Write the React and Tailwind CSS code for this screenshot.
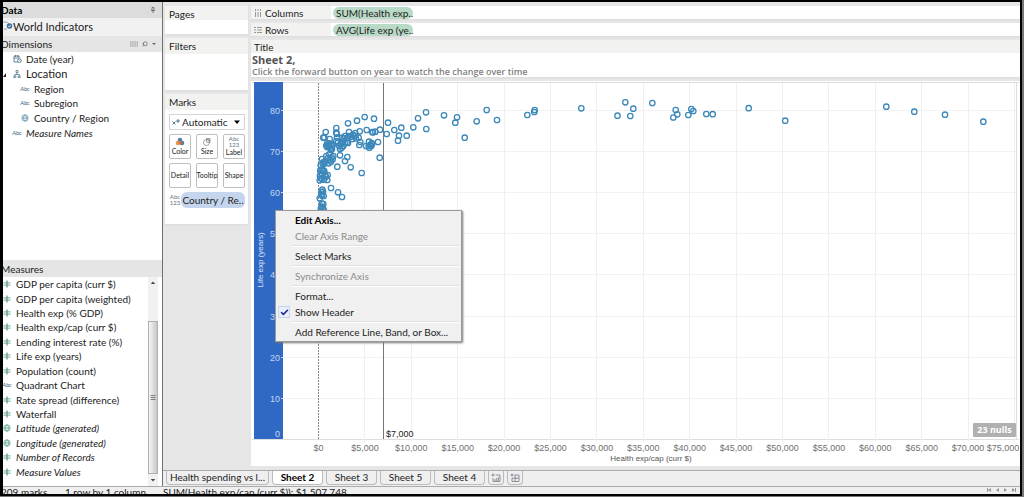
import React from "react";
import { Search, Check } from "lucide-react";

const dimensions = [
  { name: "Date (year)", icon: "date", indent: "pl-2" },
  { name: "Location", icon: "tree", indent: "pl-2", group: true },
  { name: "Region", icon: "abc", indent: "pl-4" },
  { name: "Subregion", icon: "abc", indent: "pl-4" },
  { name: "Country / Region", icon: "globe", indent: "pl-4" },
  { name: "Measure Names", icon: "abc", indent: "pl-2", italic: true },
];

const measures = [
  { name: "GDP per capita (curr $)", icon: "number" },
  { name: "GDP per capita (weighted)", icon: "number" },
  { name: "Health exp (% GDP)", icon: "number" },
  { name: "Health exp/cap (curr $)", icon: "number" },
  { name: "Lending interest rate (%)", icon: "number" },
  { name: "Life exp (years)", icon: "number" },
  { name: "Population (count)", icon: "number" },
  { name: "Quadrant Chart", icon: "abc" },
  { name: "Rate spread (difference)", icon: "number" },
  { name: "Waterfall", icon: "number" },
  { name: "Latitude (generated)", icon: "greenGlobe", italic: true },
  { name: "Longitude (generated)", icon: "greenGlobe", italic: true },
  { name: "Number of Records", icon: "number", italic: true },
  { name: "Measure Values", icon: "number", italic: true },
];

const sheets = ["Health spending vs l...", "Sheet 2", "Sheet 3", "Sheet 5", "Sheet 4"];

const xTicks = [
  "$0", "$5,000", "$10,000", "$15,000", "$20,000", "$25,000", "$30,000", "$35,000",
  "$40,000", "$45,000", "$50,000", "$55,000", "$60,000", "$65,000", "$70,000", "$75,000",
];

// circle centres, in the units of the chart's viewBox
const points = [
  [426, 112.3], [426.3, 129], [418, 118.3], [413.3, 127.3], [406.7, 135.7],
  [401.3, 127.7], [399, 135.7], [398, 140.7], [394.3, 130], [388, 122.7],
  [386.7, 134], [379.7, 157.7], [380, 129.7], [378, 142], [374, 118.7],
  [364.7, 117], [357, 120.7], [348, 123.3], [336.3, 128], [366.7, 130],
  [372.3, 132], [373, 132.4], [375.3, 131.7], [359.7, 131.3], [349, 132],
  [336.3, 132.7], [336.7, 133.7], [325.7, 132], [323.3, 137.7], [324.3, 137.5],
  [329.7, 139], [327.3, 143], [328, 144.5], [326.3, 145.5], [329.3, 143.5],
  [330.7, 144], [331.7, 145.7], [328.7, 147], [330.3, 148], [332, 149],
  [333, 144.7], [327, 147], [331, 150], [336.3, 141], [338, 142.7],
  [339.3, 146], [340.7, 144], [342.3, 141.7], [343.3, 146], [344.7, 143.3],
  [340, 149], [341.7, 147.7], [346.7, 142.5], [343.7, 138.3], [342, 137.7],
  [347.3, 138], [348.7, 136], [350.7, 136.7], [352.3, 139], [355, 136],
  [356, 138.5], [355.3, 133], [353, 134.7], [358.7, 137.7], [360.3, 142],
  [359.3, 145], [345, 136], [348, 143], [337, 137.5],
  [369, 141.7], [366, 146], [370.3, 145], [371.3, 146], [369.3, 147.7],
  [372, 144.3], [368.7, 146], [371.7, 143],
  [340, 155.3], [347.3, 157], [345, 161], [337.3, 166.7], [350.7, 167.3],
  [361.7, 173], [326.3, 156], [328, 158], [329.7, 160], [331.7, 157.3],
  [333.3, 156], [332.7, 159.3], [331, 161.7], [328.7, 163.3], [329, 154.5],
  [322, 159], [323.7, 162], [320.7, 165], [322.7, 163.7], [324.3, 163.7],
  [325.5, 161], [320.3, 170.7], [321.7, 169.7], [324.3, 171], [325, 174.7],
  [320, 175.7], [322, 174], [327.7, 175], [326, 176.7], [320.7, 178],
  [319.7, 180.3], [324, 179.7], [327.3, 180], [321.7, 178.7], [323, 170],
  [331, 188], [338, 192.3], [342, 197], [322.3, 189.7], [323, 191.7],
  [321.7, 194.3], [319.7, 198.3], [323.7, 196], [322, 195.7], [321.3, 192],
  [323.3, 204], [321.7, 206.7], [321, 208], [323.7, 210], [320.7, 211],
  [322, 203.5], [323, 208], [444, 115.3], [457, 117.3], [455.3, 122.7],
  [464.7, 137.7], [476.7, 121.3], [486.7, 110], [497, 120], [527.3, 115],
  [534.7, 110], [534.3, 112], [581.3, 108.3], [617.5, 115.7], [625.3, 102.3],
  [633.3, 108.7], [630.3, 116], [652.3, 103], [675.7, 110], [677.3, 114.3],
  [673.3, 117.5], [688.3, 115], [691.3, 109], [693.3, 111], [706.3, 114],
  [712.7, 114.2], [748.7, 108.2], [785.2, 120.7], [886.3, 106.7], [914.3, 111.7],
  [945, 114.7], [983.3, 121.7],
];

const FieldIcon = ({ type }) => {
  if (type === "abc") {
    return (
      <span className="w-3 shrink-0 text-center text-[6px] italic text-[#3a647f]" aria-hidden="true">
        Abc
      </span>
    );
  }
  if (type === "number") {
    return (
      <svg className="w-3 h-2 shrink-0 stroke-[#4c8f78]" viewBox="0 0 12 8" fill="none">
        <path d="M6 0.5v7" strokeWidth="1.6" strokeOpacity="0.7" />
        <path d="M2.5 2.9h7M2.5 5.1h7" strokeWidth="0.8" />
      </svg>
    );
  }
  if (type === "globe" || type === "greenGlobe") {
    return (
      <svg
        className={`w-3 h-2 shrink-0 ${type === "globe" ? "stroke-[#5b8ba5]" : "stroke-[#4c9a7c]"}`}
        viewBox="0 0 12 8"
        fill="none"
        strokeWidth="0.7"
      >
        <circle cx="6" cy="4" r="3.2" />
        <ellipse cx="6" cy="4" rx="1.4" ry="3.2" />
        <path d="M3 4h6" />
      </svg>
    );
  }
  if (type === "date") {
    return (
      <svg className="w-3 h-2 shrink-0 stroke-[#52798c]" viewBox="0 0 12 8" fill="none" strokeWidth="0.9">
        <path d="M7 7H3V1h5v2M3 3h5M4.5 0v2M6.7 0v2" />
        <circle cx="8.4" cy="5.6" r="1.9" />
        <path d="M8.4 4.6v1h1" strokeWidth="0.6" />
      </svg>
    );
  }
  return (
    <svg className="w-3 h-2 shrink-0 stroke-[#52798c]" viewBox="0 0 12 8" fill="none" strokeWidth="0.8">
      <path d="M5 0.5h2v2H5zM6 2.5v2M3.8 6V4.5h4.5V6M2.8 6h2v1.5h-2zM7.2 6h2v1.5h-2z" />
    </svg>
  );
};

const Field = ({ field }) => (
  <li className={`flex flex-1 items-center gap-[3px] whitespace-nowrap ${field.indent || ""}`}>
    <FieldIcon type={field.icon} />
    <span className={`${field.italic ? "italic" : ""} ${field.group ? "text-[11px]" : ""}`}>
      {field.name}
    </span>
  </li>
);

const Sidebar = () => (
  <aside className="w-40 shrink-0 flex flex-col overflow-hidden bg-white border-r border-[#6f6f6f]">
    <h2 className="flex h-4 items-center justify-between bg-[#dcdcdc] pr-1.5 font-bold text-black">
      <span className="-ml-0.5">Data</span>
      <svg className="size-1.5 stroke-[#666]" viewBox="0 0 6 6" fill="none">
        <path d="M2 0.5h2v3H2zM1 3.5h4M3 3.5V6" strokeWidth="0.8" />
      </svg>
    </h2>
    <div className="flex h-[18px] items-center bg-[#f1f1f1] text-[11px]">
      <svg className="w-2.5 h-3 shrink-0" viewBox="0 0 10 12" fill="none">
        <path d="M0 1h4l2 2v1M1 8h3" stroke="#8ba3bd" />
        <circle cx="6.5" cy="5" r="2.8" fill="#44739f" />
        <path d="M5.2 5l1 1 1.8-2" stroke="#fff" strokeWidth="0.8" />
      </svg>
      World Indicators
    </div>
    <div className="flex h-4 items-center justify-between bg-[#e5e5e5] pr-1.5">
      <h3 className="-ml-0.5">Dimensions</h3>
      <div className="flex items-center gap-1 text-[#666]">
        <svg className="w-2 h-1.5 stroke-[#888]" viewBox="0 0 8 6" strokeDasharray="1.5 0.7">
          <path d="M0 1h8M0 3h8M0 5h8" strokeWidth="0.9" />
        </svg>
        <Search size={6} strokeWidth={3} className="-scale-x-100" />
        <svg className="w-1 h-1 fill-[#666]" viewBox="0 0 4 4">
          <path d="M0 1h4L2 3z" />
        </svg>
      </div>
    </div>
    <div className="relative flex-1">
      <ul className="flex h-[88px] flex-col">
        {dimensions.map((field) => (
          <Field key={field.name} field={field} />
        ))}
      </ul>
      <svg className="absolute left-0 top-5 w-1 h-1.5 fill-[#222]" viewBox="0 0 4 6">
        <path d="M3 1v4H0z" />
      </svg>
    </div>
    <h3 className="flex h-[17px] shrink-0 items-center bg-[#e5e5e5]">
      <span className="-ml-0.5">Measures</span>
    </h3>
    <div className="flex h-[209px] shrink-0">
      <ul className="-ml-0.5 flex flex-1 flex-col pb-[7px]">
        {measures.map((field) => (
          <Field key={field.name} field={field} />
        ))}
      </ul>
      <div className="mr-1 flex w-[10px] flex-col items-center justify-between bg-[#f1f1f1] py-1">
        <svg className="w-1.5 h-1 fill-[#444]" viewBox="0 0 6 4">
          <path d="M0.8 3h4.4L3 0.5z" />
        </svg>
        <div className="mt-9 mb-1 flex w-full flex-1 items-center justify-center border border-[#b0b0b0] bg-linear-to-r from-[#f6f6f6] to-[#c8c8c8]">
          <svg className="w-1.5 h-2 stroke-[#666]" viewBox="0 0 6 8">
            <path d="M0.5 1.5h5M0.5 3.5h5M0.5 5.5h5" strokeWidth="0.8" />
          </svg>
        </div>
        <svg className="w-1.5 h-1 fill-[#444]" viewBox="0 0 6 4">
          <path d="M0.8 1h4.4L3 3.5z" />
        </svg>
      </div>
    </div>
  </aside>
);

const MarkButton = ({ label, children }) => (
  <button className="flex h-[25px] min-w-0 flex-1 flex-col items-center justify-center rounded-xs border border-[#bfbfbf] bg-white text-[7px] leading-[9px]">
    {children}
    {label}
  </button>
);

const Shelves = () => (
  <div className="w-[83px] shrink-0 flex flex-col gap-1 pt-1">
    <section className="h-7 bg-white shadow-xs">
      <h3 className="h-[14px] bg-[#f2f2f0] px-1 leading-4">Pages</h3>
    </section>
    <section className="h-[52px] bg-white shadow-xs">
      <h3 className="h-4 bg-[#f2f2f0] px-1 leading-4">Filters</h3>
    </section>
    <section className="h-[130px] bg-white shadow-xs">
      <h3 className="h-4 bg-[#f2f2f0] px-1 leading-4">Marks</h3>
      <div className="flex flex-col gap-1 py-1 pl-1 pr-[3px]">
        <div className="relative flex h-4 items-center border border-[#d5d5d5]">
          <svg className="ml-0.5 w-2 h-2 shrink-0 stroke-[#44718f]" viewBox="0 0 8 8">
            <path d="M0.5 3.5l3 3M3.5 3.5l-3 3M4 3h4M6 1v4" strokeWidth="0.9" />
          </svg>
          <select
            aria-label="Mark type"
            className="w-full appearance-none bg-transparent pl-0.5 text-[10px] leading-[14px] outline-none"
          >
            <option>Automatic</option>
          </select>
          <svg className="pointer-events-none absolute right-1 top-1 w-1.5 h-1.5 fill-black" viewBox="0 0 6 6">
            <path d="M0 1.5h6L3 5z" />
          </svg>
        </div>
        <div className="flex gap-[5px]">
          <MarkButton label="Color">
            <svg className="size-2.5" viewBox="0 0 10 10">
              <circle cx="5" cy="3" r="2.3" fill="#4b80ad" />
              <circle cx="3" cy="6" r="2.3" fill="#e39a4d" />
              <circle cx="7" cy="6" r="2.3" fill="#5b7b99" />
              <circle cx="5" cy="5.7" r="1.7" fill="#d8703c" />
            </svg>
          </MarkButton>
          <MarkButton label="Size">
            <svg className="size-2.5 stroke-[#777]" viewBox="0 0 10 10" fill="none" strokeWidth="0.7">
              <circle cx="4.5" cy="5.5" r="3" />
              <path d="M4 1.5h4v4" />
              <circle cx="6" cy="4" r="1.6" />
            </svg>
          </MarkButton>
          <MarkButton label="Label">
            <span className="text-center text-[6px] leading-[6px] text-[#62727f]">
              Abc
              <br />
              123
            </span>
          </MarkButton>
        </div>
        <div className="flex gap-[5px]">
          <MarkButton label="Detail" />
          <MarkButton label="Tooltip" />
          <MarkButton label="Shape" />
        </div>
        <div className="flex items-center">
          <span className="w-3 text-center text-[6px] leading-[6px] text-[#62727f]">
            Abc 123
          </span>
          <button className="h-4 min-w-0 flex-1 whitespace-nowrap rounded-md bg-[#c5d5ee] text-center">
            Country / Re..
          </button>
        </div>
      </div>
    </section>
  </div>
);

const ShelfRow = ({ label, pill, rows }) => (
  <div className="flex h-[13px] items-center bg-white shadow-xs">
    <div className="flex h-full w-20 items-center gap-[3px] bg-[#f2f2f0] pl-[3px] leading-3">
      <svg className="w-2 h-2 stroke-[#999]" viewBox="0 0 8 8" strokeWidth="1">
        {rows ? (
          <path d="M0 1.5h2M3 1.5h5M0 4h2M3 4h5M0 6.5h2M3 6.5h5" />
        ) : (
          <path d="M1.5 0v2M1.5 3v5M4 0v2M4 3v5M6.5 0v2M6.5 3v5" />
        )}
      </svg>
      {label}
    </div>
    <button className="ml-0.5 h-3 w-20 whitespace-nowrap rounded-md bg-[#b9dac7] pl-[3px] text-left leading-3">
      {pill}
    </button>
  </div>
);

const Chart = () => (
  <svg
    className="h-full w-full"
    viewBox="251 81 769 385"
    fontFamily="Liberation Sans, sans-serif"
    fontSize="9"
    role="img"
    aria-label="Life exp (years) by Health exp/cap (curr $)"
  >
    <path d="M252 82.5H1019M252 439.5H1019M1016.5 82V440" stroke="#dedede" fill="none" />
    {[0, 1, 2, 3, 4, 5, 6, 7].map((i) => (
      <path key={i} d={`M283 ${Math.round(110 + i * 41.1)}.5H1016`} stroke="#f2f2f2" />
    ))}
    {xTicks.map((tick, i) => (
      <g key={tick}>
        {i > 0 && <path d={`M${Math.round(318 + i * 46.4)}.5 83V442`} stroke="#f0f0f0" />}
        <text x={i === 15 ? 1003 : 318.5 + i * 46.4} y="451" textAnchor="middle" fill="#707070">
          {tick}
        </text>
      </g>
    ))}
    <path d="M318.5 83V439" stroke="#888" strokeDasharray="2 1" />
    <path d="M383.5 83V439" stroke="#777" />
    <rect x="254" y="82" width="29" height="357" fill="#3069c4" />
    {[80, 70, 60, 50, 40, 30, 20, 10].map((value, i) => (
      <g key={value}>
        <text x="280" y={114 + i * 41.1} textAnchor="end" fill="#c2d6f5">
          {value}
        </text>
        <path d={`M281 ${Math.round(110 + i * 41.1)}.5h2`} stroke="#c2d6f5" />
      </g>
    ))}
    <text x="280" y="437" textAnchor="end" fill="#c2d6f5">0</text>
    <text transform="translate(263 260) rotate(-90)" textAnchor="middle" fontSize="8" fill="#dbe7fa">
      Life exp (years)
    </text>
    <g fill="none" stroke="#3c88ba" strokeWidth="1.3">
      {points.map(([x, y], i) => (
        <circle key={i} cx={x} cy={y} r="2.7" />
      ))}
    </g>
    <text x="386" y="437" fill="#222">$7,000</text>
    <text x="651" y="461" textAnchor="middle" fontSize="8" fill="#555">
      Health exp/cap (curr $)
    </text>
    <rect x="973" y="423" width="43" height="14" rx="1" fill="#b0b0b0" />
    <text x="994.5" y="433" textAnchor="middle" fontFamily="Open Sans, sans-serif" fontWeight="bold" fill="#fff">
      23 nulls
    </text>
  </svg>
);

const MenuItem = ({ children, className = "", disabled, checked }) => (
  <button
    role={checked ? "menuitemcheckbox" : "menuitem"}
    aria-checked={checked}
    disabled={disabled}
    className={`relative block h-4 w-full whitespace-nowrap pl-[19px] text-left leading-4 disabled:text-[#8b8b8b] ${className}`}
  >
    {checked && (
      <span className="absolute left-0.5 top-0.5 flex size-3 items-center justify-center border border-[#c5d5ee] bg-[#e6eefa]">
        <Check size={9} strokeWidth={4} className="text-[#24258a]" />
      </span>
    )}
    {children}
  </button>
);

const Separator = () => <hr className="my-px ml-4 mr-0.5 h-0.5 border-t border-[#e2e2e2] bg-white" />;

const ContextMenu = () => (
  <div
    role="menu"
    className="absolute left-6 top-[129px] w-[187px] border border-[#9a9a9a] bg-[#f0f0f0] py-px text-[10px] text-[#222] shadow-[1px_1px_2px_#777]"
  >
    <MenuItem className="font-bold text-black">Edit Axis...</MenuItem>
    <MenuItem disabled>Clear Axis Range</MenuItem>
    <Separator />
    <MenuItem>Select Marks</MenuItem>
    <Separator />
    <MenuItem disabled>Synchronize Axis</MenuItem>
    <Separator />
    <MenuItem>Format...</MenuItem>
    <MenuItem checked>Show Header</MenuItem>
    <Separator />
    <MenuItem>Add Reference Line, Band, or Box...</MenuItem>
  </div>
);

const Worksheet = () => (
  <main className="flex min-w-0 flex-1 flex-col pt-1">
    <div className="flex flex-col gap-1">
      <ShelfRow label="Columns" pill="SUM(Health exp.." />
      <ShelfRow label="Rows" pill="AVG(Life exp (ye.." rows />
    </div>
    <section className="mt-1 h-[37px] bg-white shadow-xs">
      <h3 className="h-[13px] bg-[#f2f2f0] pl-[3px] leading-[14px]">Title</h3>
      <div className="pl-px font-['Open_Sans',sans-serif]">
        <h1 className="text-[11px] font-bold leading-[13px] text-[#555]">Sheet 2,</h1>
        <p className="text-[9px] font-semibold leading-[11px] text-[#808080]">
          Click the forward button on year to watch the change over time
        </p>
      </div>
    </section>
    <section className="relative mt-1 min-h-0 flex-1 bg-white">
      <Chart />
      <ContextMenu />
    </section>
  </main>
);

const SheetTabs = () => (
  <nav className="mt-1 flex h-4 items-start gap-[3px] border-t border-[#aaa] bg-[#efefef] pl-[3px]">
    {sheets.map((sheet, i) => (
      <button
        key={sheet}
        className={`h-[14px] whitespace-nowrap rounded-b border border-t-0 border-[#bbb] leading-[13px] ${
          i === 0 ? "w-[103px]" : "w-[51px]"
        } ${sheet === "Sheet 2" ? "bg-white font-bold text-black" : ""}`}
      >
        {sheet}
      </button>
    ))}
    {["New worksheet", "New dashboard"].map((label, i) => (
      <button
        key={label}
        aria-label={label}
        className="flex h-[14px] w-4 items-center justify-center rounded-b border border-t-0 border-[#bbb]"
      >
        <svg className="w-2.5 h-2.5 stroke-[#778]" viewBox="0 0 10 10" fill="none" strokeWidth="0.8">
          <path d="M2 0.5v3M0.5 2h3M4.5 2H9v6.5H2V5" />
          <path d={i === 0 ? "M4 8V6M5.7 8V5M7.4 8V4" : "M2 5.2h7M5.2 2v6.5"} />
        </svg>
      </button>
    ))}
  </nav>
);

const App = () => (
  <div className="h-screen bg-[#777] pr-0.5 pb-px">
    <div
      className="flex h-full flex-col overflow-hidden border-2 border-l-3 border-black bg-[#e6e6e6] font-[Lato,sans-serif] text-[10px] leading-[14px] text-[#222]"
    >
      <div className="flex min-h-0 flex-1">
        <Sidebar />
        <div className="flex min-w-0 flex-1 flex-col">
          <div className="flex min-h-0 flex-1 gap-[3px] pl-0.5">
            <Shelves />
            <Worksheet />
          </div>
          <SheetTabs />
        </div>
      </div>
      <footer className="flex h-2 shrink-0 overflow-hidden border-t border-[#aaa] bg-[#efefef] leading-[10px]">
        <span className="-ml-0.5 w-16 shrink-0">209 marks</span>
        <span className="w-[98px] shrink-0">1 row by 1 column</span>
        <span>SUM(Health exp/cap (curr $)): $1,507,748</span>
        <svg className="ml-auto mr-0.5 w-8 h-1.5 shrink-0 fill-[#999]" viewBox="0 0 32 6">
          <path d="M1 1h1v4H1zM5 1v4L2 3zM13 1v4l-3-2zM18 1v4l3-2zM26 1v4l3-2zM29 1h1v4h-1z" />
        </svg>
      </footer>
    </div>
  </div>
);

export default App;
